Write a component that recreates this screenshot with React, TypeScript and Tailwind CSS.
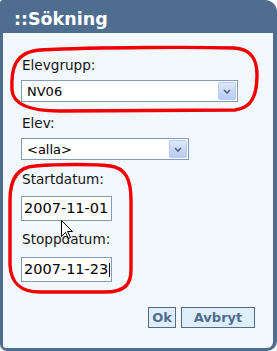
export default function App() {
  return (
    <div className="w-[277px] h-[351px] bg-white font-['DejaVu_Sans',Verdana,sans-serif]">
      <div className="relative w-[277px] h-[351px] flex flex-col bg-[#4f6e8f] rounded-tl-[3px] rounded-tr-[12px] rounded-bl-[7px] rounded-br-[10px] pl-[3px] pr-[4px] pb-[3px]">
        {/* Header */}
        <div className="h-[33px] shrink-0 pl-[11px] pt-[9px]">
          <h1 className="text-white font-bold text-[17.5px] leading-[20px]">::Sökning</h1>
        </div>

        {/* Body */}
        <div className="flex-1 flex flex-col bg-[#f3f8fc] rounded-bl-[3px] rounded-br-[6px] pl-[18px] pt-[24px] text-[13.6px] text-[#151515]">
          <label className="leading-[16px] pl-[1px]">Elevgrupp:</label>
          <Select value="NV06" width="w-[217px]" className="mt-[7px]" />

          <label className="leading-[16px] pl-[1px] mt-[13px]">Elev:</label>
          <Select value="<alla>" width="w-[168px]" className="mt-[7px]" />

          <label className="leading-[16px] pl-[1px] mt-[11px]">Startdatum:</label>
          <div className="mt-[9px] w-[91px] h-[25px] border border-[#7f9db9] bg-white flex items-center pl-[2px] text-[14.5px] text-black">
            2007-11-01
          </div>

          <label className="leading-[16px] pl-[1px] mt-[10px]">Stoppdatum:</label>
          <div className="mt-[10px] w-[91px] h-[25px] border border-[#7f9db9] bg-white flex items-center pl-[2px] text-[14.5px] text-black">
            2007-11-23
            <span className="ml-[1px] w-px h-[14px] bg-black" />
          </div>

          <div className="mt-[25px] flex justify-end gap-[5px] pr-[18px]">
            <button className="w-[28px] h-[21px] border border-[#4f6e8f] bg-[#e0eefc] text-[#4f6e8f] font-bold text-[13px] leading-none">
              Ok
            </button>
            <button className="w-[74px] h-[21px] border border-[#4f6e8f] bg-[#e0eefc] text-[#4f6e8f] font-bold text-[13px] leading-none">
              Avbryt
            </button>
          </div>
        </div>

        {/* Red hand-drawn marks + mouse pointer */}
        <svg className="absolute inset-0 pointer-events-none" width="277" height="351" viewBox="0 0 277 351">
          <path
            d="M40 50 C100 47, 200 47, 234 48 C252 49, 257 60, 257 75 C257 95, 252 108, 235 110 L60 111 C30 111, 13 105, 12 90 C11 70, 14 52, 40 50 Z"
            fill="none"
            stroke="#f00000"
            strokeWidth="3.4"
          />
          <path
            d="M35 166 C60 164, 95 164, 110 166 C126 168, 131 180, 131 200 L131 270 C131 285, 124 292, 105 292 L40 292 C20 292, 11 283, 10 265 L10 200 C10 180, 17 167, 35 166 Z"
            fill="none"
            stroke="#f00000"
            strokeWidth="3.4"
          />
          <path
            d="M61.5 220.5 L61.5 236.5 L65.5 232.5 L68.5 238.5 L70.5 237.5 L67.5 231.5 L72.5 231.5 Z"
            fill="white"
            stroke="black"
            strokeWidth="1"
          />
        </svg>
      </div>
    </div>
  );
}

function Select({ value, width, className }: { value: string; width: string; className?: string }) {
  return (
    <div className={`${width} ${className ?? ""} h-[22px] border border-[#7f9db9] bg-white flex items-center justify-between pl-[5px] pr-px`}>
      <span className="text-[13px] text-black leading-none">{value}</span>
      <span className="w-[18px] h-[18px] rounded-[2px] border border-[#b9cbf3] bg-gradient-to-b from-[#dfe8fc] to-[#b7cbf5] flex items-center justify-center">
        <svg width="8" height="5" viewBox="0 0 8 5">
          <path d="M1 1 L4 4 L7 1" fill="none" stroke="#4d6185" strokeWidth="1.6" />
        </svg>
      </span>
    </div>
  );
}
